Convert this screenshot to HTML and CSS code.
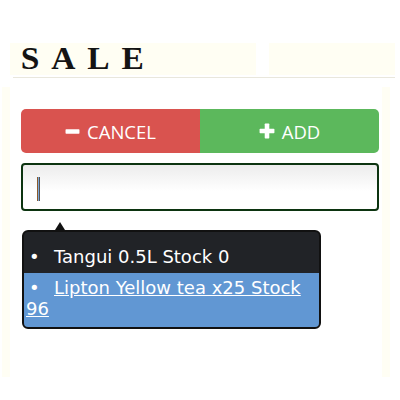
FILE: index.html
```html
<!DOCTYPE html>
<html>
<head>
<meta charset="utf-8">
<link rel="stylesheet" href="styles.css">
</head>
<body>
<div class="header">
  <h1 class="title">SALE</h1>
  <div class="notch"></div>
</div>
<div class="rule"></div>
<div class="outer">
  <div class="panel">
    <div class="btns">
      <button class="btn cancel"><svg class="ico" viewBox="0 0 14 14" width="15" height="15"><rect x="0.5" y="5" width="13" height="4" rx="0.6" fill="#fff"/></svg>CANCEL</button>
      <button class="btn add"><svg class="ico" viewBox="0 0 14 14" width="16" height="16"><rect x="0.5" y="5" width="13" height="4" rx="0.6" fill="#fff"/><rect x="5" y="0.5" width="4" height="13" rx="0.6" fill="#fff"/></svg>ADD</button>
    </div>
    <div class="field"><span class="caret"></span></div>
    <div class="tip">
      <ul class="list">
        <li class="item">Tangui 0.5L Stock 0</li>
        <li class="item sel"><a>Lipton Yellow tea x25 Stock 96</a></li>
      </ul>
    </div>
  </div>
</div>
</body>
</html>
```
FILE: styles.css
```css
html, body { margin: 0; padding: 0; background: #fff; }
body { width: 400px; height: 400px; overflow: hidden; font-family: "Lato", "Open Sans", sans-serif; }
.header {
  margin: 43px 5px 0 10px;
  height: 32px;
  background: #fffef3;
  display: flex;
  align-items: flex-start;
}
.title {
  margin: 0;
  padding: 1px 0 0 10px;
  font-family: "Liberation Serif", serif;
  font-weight: bold;
  font-size: 31px;
  line-height: 30px;
  letter-spacing: 11px;
  transform: scaleX(1.08);
  transform-origin: left center;
  color: #141414;
  width: 235px;
}
.notch { width: 13px; height: 32px; background: #fff; margin-left: 1px; }
.rule { margin: 2px 5px 0 13px; height: 1px; background: #e9e7dc; }
.outer {
  margin: 9px 10px 0 2px;
  background: #fffef4;
  height: 290px;
  padding: 0 8px 0 8px;
}
.panel {
  background: #fff;
  height: 290px;
  padding: 22px 0 0 11px;
  box-sizing: border-box;
}
.btns { display: flex; width: 358px; height: 44px; }
.btn {
  flex: 1;
  border: 0;
  color: #fff;
  font-family: "Open Sans", "Lato", sans-serif;
  font-size: 18.5px;
  display: flex;
  align-items: center;
  justify-content: center;
  gap: 7px;
  padding: 0;
}
.ico { display: block; }
.cancel { background: #d9534f; border-radius: 5px 0 0 5px; }
.add { background: #5cb85c; border-radius: 0 5px 5px 0; }
.field {
  margin-top: 10px;
  width: 358px;
  height: 48px;
  box-sizing: border-box;
  border: 2px solid #0c3410;
  border-radius: 4px;
  background: linear-gradient(#ececec, #fff 60%);
  position: relative;
}
.caret {
  position: absolute;
  left: 14px;
  top: 12px;
  width: 3px;
  height: 24px;
  background: linear-gradient(90deg, #8a5a2a 0 1px, #7aa6d8 1px 2px, #555 2px 3px);
}
.tip {
  margin-top: 19px;
  margin-left: 1px;
  width: 299px;
  box-sizing: border-box;
  background: #212327;
  border: 2px solid #111;
  border-radius: 6px;
  position: relative;
  padding-top: 12px;
}
.tip::before {
  content: "";
  position: absolute;
  left: 31px;
  top: -10px;
  border: 5px solid transparent;
  border-bottom: 8px solid #111;
  border-top: 0;
}
.list {
  margin: 0;
  padding: 0;
  list-style: none;
  font-family: "DejaVu Sans", sans-serif;
  font-size: 18px;
  line-height: 21px;
  color: #fff;
}
.item { padding: 2px 8px 6px 2px; }
.item::before { content: "•"; display: inline-block; width: 28px; padding-left: 3px; box-sizing: border-box; }
.sel { background: #6197d3; padding: 4px 8px 8px 2px; border-radius: 0 0 4px 4px; }
.sel a { text-decoration: underline; color: #fff; }
```
